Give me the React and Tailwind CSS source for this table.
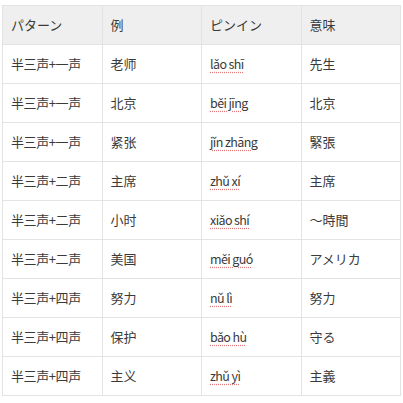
const rows = [
  ['半三声+一声', '老师', 'lǎo shī', '先生'],
  ['半三声+一声', '北京', 'běi jīng', '北京'],
  ['半三声+一声', '紧张', 'jǐn zhāng', '緊張'],
  ['半三声+二声', '主席', 'zhǔ xí', '主席'],
  ['半三声+二声', '小时', 'xiǎo shí', '～時間'],
  ['半三声+二声', '美国', 'měi guó', 'アメリカ'],
  ['半三声+四声', '努力', 'nǔ lì', '努力'],
  ['半三声+四声', '保护', 'bǎo hù', '守る'],
  ['半三声+四声', '主义', 'zhǔ yì', '主義'],
];

export default function App() {
  return (
    <div className="w-[403px] h-[403px] bg-white pt-[5px] pl-[2px] font-['Noto_Sans_CJK_SC','Noto_Sans_CJK_JP',sans-serif] text-[13px] text-[#3a3a3a]">
      <table className="w-[399px] border-collapse table-fixed">
        <thead>
          <tr className="h-[39px] bg-[#efefef]">
            {['パターン', '例', 'ピンイン', '意味'].map((h) => (
              <th key={h} className="border border-[#e3e3e3] px-[8px] text-left font-normal">
                {h}
              </th>
            ))}
          </tr>
        </thead>
        <tbody>
          {rows.map((r, i) => (
            <tr key={i} className="h-[39px]">
              <td className="border border-[#e3e3e3] px-[8px] tracking-[-0.4px]">{r[0]}</td>
              <td className="border border-[#e3e3e3] px-[8px]">{r[1]}</td>
              <td className="border border-[#e3e3e3] px-[8px]">
                <span className="text-[12.5px] underline decoration-dotted decoration-[#e07a7a] underline-offset-[3px] tracking-[-0.6px]">
                  {r[2]}
                </span>
              </td>
              <td className="border border-[#e3e3e3] px-[8px]">{r[3]}</td>
            </tr>
          ))}
        </tbody>
      </table>
    </div>
  );
}
